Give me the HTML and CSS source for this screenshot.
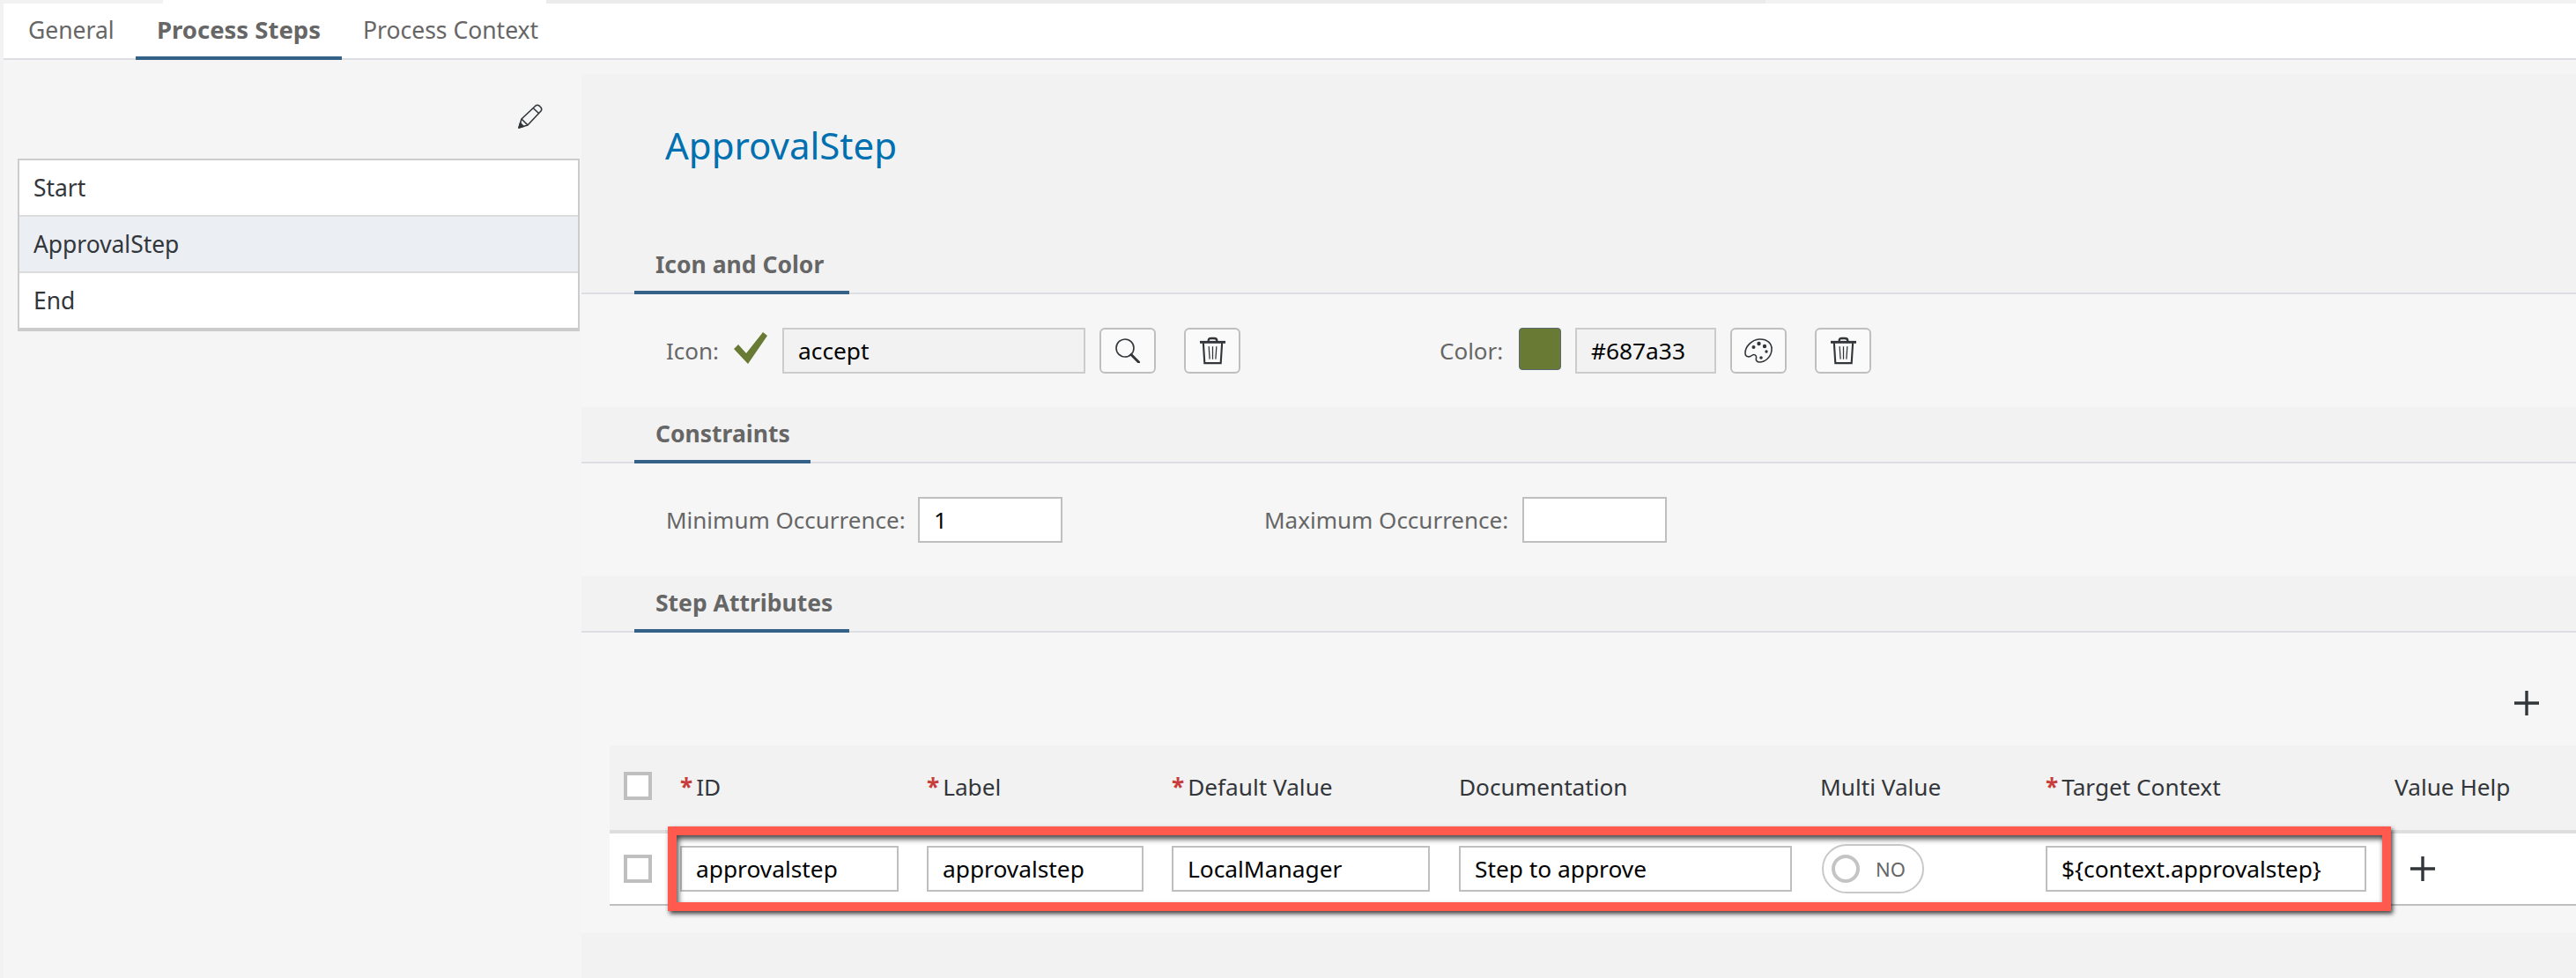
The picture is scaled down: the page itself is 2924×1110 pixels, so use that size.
FILE: index.html
```html
<!DOCTYPE html>
<html lang="en">
<head>
<meta charset="utf-8">
<title>Process Steps</title>
<link rel="stylesheet" href="styles.css">
</head>
<body>
<div class="strip"><span class="seg seg-a"></span><span class="seg seg-b"></span><span class="seg seg-c"></span><span class="seg seg-d"></span></div>
<div class="page">
  <nav class="tabs">
    <span class="tab tab-general">General</span>
    <span class="tab tab-active">Process Steps</span>
    <span class="tab tab-context">Process Context</span>
  </nav>
  <div class="content">
    <aside class="side">
      <div class="side-tools">
        <svg class="pencil" viewBox="0 0 28 28" fill="none" stroke="#32363a" stroke-width="1.6" stroke-linejoin="round"><path d="M1 27 L4 17 L20 2 Q22 0.5 24 2 L26 4 Q27.5 6 26 8 L11 24 Z"/><path d="M17.5 5 L23.5 10.5"/><path d="M4 17 L11 24"/><path d="M1 27 L2.6 21.6 L6 25.4 Z" fill="#32363a"/></svg>
      </div>
      <ul class="steps">
        <li class="step">Start</li>
        <li class="step step-selected">ApprovalStep</li>
        <li class="step">End</li>
      </ul>
    </aside>
    <main class="detail">
      <div class="detail-head">
        <h1 class="detail-title">ApprovalStep</h1>
      </div>
      <div class="sec-head sec-first"><span class="sec-tab sec-tab-wide">Icon and Color</span></div>
      <div class="sec-body row">
        <span class="lbl lbl-icon">Icon:</span>
        <svg class="check" viewBox="0 0 38 36"><path fill="#687a33" d="M0 19 L5 14 L14 24 L33 0 L38 4 L16 36 Z"/></svg>
        <div class="input input-ro input-accept">accept</div>
        <button class="btn btn-search" type="button"><svg class="ico-search" viewBox="0 0 28 28" fill="none" stroke="#32363a"><circle cx="11" cy="11" r="10" stroke-width="1.6"/><path d="M18 18.5 L26.5 27" stroke-width="3" stroke-linecap="round"/></svg></button>
        <button class="btn btn-gap" type="button"><svg class="ico-trash" viewBox="0 0 30 32" fill="none" stroke="#32363a"><path d="M0 6h30" stroke-width="3"/><path d="M10 4.5 Q10 1.5 13 1.5 H17 Q20 1.5 20 4.5" stroke-width="2.4"/><path d="M4 7 L5.5 30.6 H24.5 L26 7" stroke-width="2.2"/><path d="M10.5 11 L11.5 26 M15 11 V26 M19.5 11 L18.5 26" stroke-width="1.3"/></svg></button>
        <span class="lbl lbl-color">Color:</span>
        <span class="swatch"></span>
        <div class="input input-ro input-color">#687a33</div>
        <button class="btn btn-palette" type="button"><svg class="ico-palette" viewBox="0 0 32 28" fill="none" stroke="#32363a" stroke-width="1.6"><path d="M17 1 C26 0.5 31.5 6 31 13 C30.5 21 24 27 17 27 C13.5 27 13 24.5 13.5 22 C14 19 11 17.5 8.5 19.5 C6 21.5 1.5 21.5 1 17.5 C0.5 10 8 1.5 17 1 Z"/><g fill="#32363a" stroke="none"><circle cx="10.5" cy="10" r="2"/><circle cx="16.5" cy="6" r="2.2"/><circle cx="23" cy="9" r="2.2"/><circle cx="25" cy="15" r="1.7"/><circle cx="19" cy="22" r="1.8"/></g></svg></button>
        <button class="btn btn-gap" type="button"><svg class="ico-trash" viewBox="0 0 30 32" fill="none" stroke="#32363a"><path d="M0 6h30" stroke-width="3"/><path d="M10 4.5 Q10 1.5 13 1.5 H17 Q20 1.5 20 4.5" stroke-width="2.4"/><path d="M4 7 L5.5 30.6 H24.5 L26 7" stroke-width="2.2"/><path d="M10.5 11 L11.5 26 M15 11 V26 M19.5 11 L18.5 26" stroke-width="1.3"/></svg></button>
      </div>
      <div class="sec-head"><span class="sec-tab sec-tab-narrow">Constraints</span></div>
      <div class="sec-body row">
        <span class="lbl lbl-min">Minimum Occurrence:</span>
        <div class="input input-occ">1</div>
        <span class="lbl lbl-max">Maximum Occurrence:</span>
        <div class="input input-occ"></div>
      </div>
      <div class="sec-head"><span class="sec-tab sec-tab-wide">Step Attributes</span></div>
      <div class="sec-body attrs">
        <div class="attrs-tools">
          <svg class="plus" viewBox="0 0 28 28"><path d="M14 0 V28 M0 14 H28" stroke="#32363a" stroke-width="3.4" fill="none"/></svg>
        </div>
        <div class="table">
          <div class="tr thead">
            <span class="box"></span>
            <span class="th"><span class="req">*</span>ID</span>
            <span class="th"><span class="req">*</span>Label</span>
            <span class="th"><span class="req">*</span>Default Value</span>
            <span class="th th-doc">Documentation</span>
            <span class="th">Multi Value</span>
            <span class="th"><span class="req">*</span>Target Context</span>
            <span class="th">Value Help</span>
          </div>
          <div class="tr tbody">
            <span class="box"></span>
            <div class="input input-id">approvalstep</div>
            <div class="input input-label">approvalstep</div>
            <div class="input input-default">LocalManager</div>
            <div class="input input-doc">Step to approve</div>
            <div class="toggle"><span class="knob"></span><span class="toggle-text">NO</span></div>
            <div class="input input-target">${context.approvalstep}</div>
            <svg class="plus plus-row" viewBox="0 0 28 28"><path d="M14 0 V28 M0 14 H28" stroke="#32363a" stroke-width="3.4" fill="none"/></svg>
            <div class="highlight"></div>
          </div>
        </div>
      </div>
      <div class="foot"></div>
    </main>
  </div>
</div>
</body>
</html>
```
FILE: styles.css
```css
* { box-sizing: border-box; }
html, body { margin: 0; padding: 0; }
body {
  width: 2924px;
  height: 1110px;
  overflow: hidden;
  background: #f2f2f2;
  font-family: "Noto Sans", "Liberation Sans", sans-serif;
  font-size: 26px;
  color: #32363a;
}
.strip { display: flex; height: 4px; }
.seg { display: block; height: 4px; }
.seg-a { width: 185px; background: #f2f2f2; }
.seg-b { width: 435px; background: #ffffff; }
.seg-c { width: 1384px; background: #ebebeb; }
.seg-d { flex: 1; background: #f2f2f2; }

.page { padding-left: 4px; }

.tabs {
  display: flex;
  height: 64px;
  background: #fff;
  border-bottom: 2px solid #dddde4;
  font-size: 26.5px;
  color: #666;
}
.tab { display: block; line-height: 60px; }
.tab-general { margin-left: 28px; width: 122px; }
.tab-active {
  width: 234px;
  height: 64px;
  text-align: center;
  font-weight: 700;
  font-size: 27.5px;
  color: #666;
  border-bottom: 4px solid #346187;
}
.tab-context { margin-left: 24px; }

.content { display: flex; height: 1042px; }

.side { width: 656px; background: #f5f5f5; flex: none; padding: 50px 2px 0 16px; }
.side-tools { display: flex; justify-content: flex-end; height: 62px; padding-right: 42px; }
.pencil { width: 28px; height: 28px; }
.steps {
  list-style: none;
  margin: 0;
  padding: 0;
  border: 2px solid #ccc;
  border-bottom-width: 4px;
  background: #fff;
}
.step { height: 62px; padding-left: 16px; line-height: 63px; font-size: 26.4px; }
.step + .step { height: 64px; border-top: 2px solid #dcdcdc; }
.step-selected { background: #ebeef3; }

.detail { flex: 1; padding-top: 16px; background: #f5f5f5; }
.detail-head { height: 186px; background: #f2f2f2; padding: 54px 0 0 95px; }
.detail-title { margin: 0; font-size: 42px; font-weight: 400; line-height: 54px; color: #0070b1; }

.sec-head {
  height: 64px;
  padding-left: 60px;
  background: #f2f2f2;
  border-bottom: 2px solid #dddde4;
}
.sec-tab {
  display: block;
  height: 64px;
  padding-left: 24px;
  border-bottom: 4px solid #346187;
  font-weight: 700;
  font-size: 26.5px;
  line-height: 60px;
  color: #666;
}
.sec-tab-wide { width: 244px; }
.sec-tab-narrow { width: 200px; }

.sec-body { background: #f6f6f6; }
.row {
  display: flex;
  align-items: flex-start;
  height: 128px;
  padding: 38px 0 0 96px;
}

.lbl { display: block; flex: none; line-height: 52px; font-size: 26px; color: #666; }
.lbl-icon { width: 77px; }
.check { width: 38px; height: 36px; margin: 5px 17px 0 0; flex: none; }
.lbl-color { width: 90px; margin-left: 226px; }
.lbl-min { width: 286px; }
.lbl-max { width: 293px; margin-left: 229px; }

.input {
  height: 52px;
  flex: none;
  padding-left: 16px;
  border: 2px solid #bfbfbf;
  background: #fff;
  color: #000;
  font-size: 26.3px;
  line-height: 48px;
  white-space: nowrap;
}
.input-ro { background: #f2f2f2; border-color: #ccc; }
.input-accept { width: 344px; }
.input-color { width: 160px; }
.input-occ { width: 164px; }
.input-id { width: 248px; }
.input-label { width: 246px; }
.input-default { width: 293px; }
.input-doc { width: 378px; }
.input-target { width: 364px; }

.btn {
  display: flex;
  align-items: center;
  justify-content: center;
  width: 64px;
  height: 52px;
  flex: none;
  padding: 0;
  background: #fafafa;
  border: 2px solid #bfbfbf;
  border-radius: 6px;
}
.btn-search { margin-left: 16px; }
.btn-palette { margin-left: 16px; }
.btn-gap { margin-left: 32px; }
.ico-search { width: 28px; height: 28px; }
.ico-trash { width: 29px; height: 32px; }
.ico-palette { width: 32px; height: 28px; }

.swatch {
  display: block;
  flex: none;
  width: 48px;
  height: 48px;
  margin-right: 16px;
  background: #687a33;
  border: 1px solid #5a6672;
  border-radius: 4px;
}

.attrs { height: 341px; padding-top: 66px; }
.attrs-tools { display: flex; justify-content: flex-end; height: 62px; padding-right: 42px; }
.plus { display: block; width: 28px; height: 28px; flex: none; }

.table { margin-left: 32px; }
.tr {
  display: grid;
  grid-template-columns: 64px 280px 278px 326px 410px 256px 396px 1fr;
  align-items: center;
  padding-left: 16px;
  position: relative;
}
.thead { height: 100px; padding-bottom: 4px; background: #f2f2f2; border-bottom: 4px solid #dedede; }
.tbody { height: 82px; background: #fff; border-bottom: 2px solid #bfbfbf; }
.box { display: block; width: 32px; height: 32px; border: 4px solid #bfbfbf; background: #fff; }
.th { padding-top: 2px; font-size: 26.2px; color: #32363a; white-space: nowrap; }
.req { color: #c83c3c; font-weight: 700; padding-right: 4px; }

.toggle {
  display: flex;
  align-items: center;
  width: 116px;
  height: 56px;
  padding-left: 9px;
  margin-left: 2px;
  background: #fff;
  border: 2px solid #c8c8c8;
  border-radius: 28px;
}
.knob { display: block; width: 32px; height: 32px; border: 4px solid #c4c4c4; border-radius: 50%; }
.toggle-text { margin-left: 18px; font-size: 22px; color: #666; }
.plus-row { margin-left: 18px; }

.highlight {
  position: absolute;
  left: 66px;
  top: -8px;
  width: 1956px;
  height: 96px;
  border: 10px solid #ff5a4d;
  box-shadow: 2px 3px 5px rgba(0, 0, 0, 0.75), inset 2px 4px 6px rgba(0, 0, 0, 0.75);
  pointer-events: none;
}

.foot { height: 51px; background: #f2f2f2; }
```
